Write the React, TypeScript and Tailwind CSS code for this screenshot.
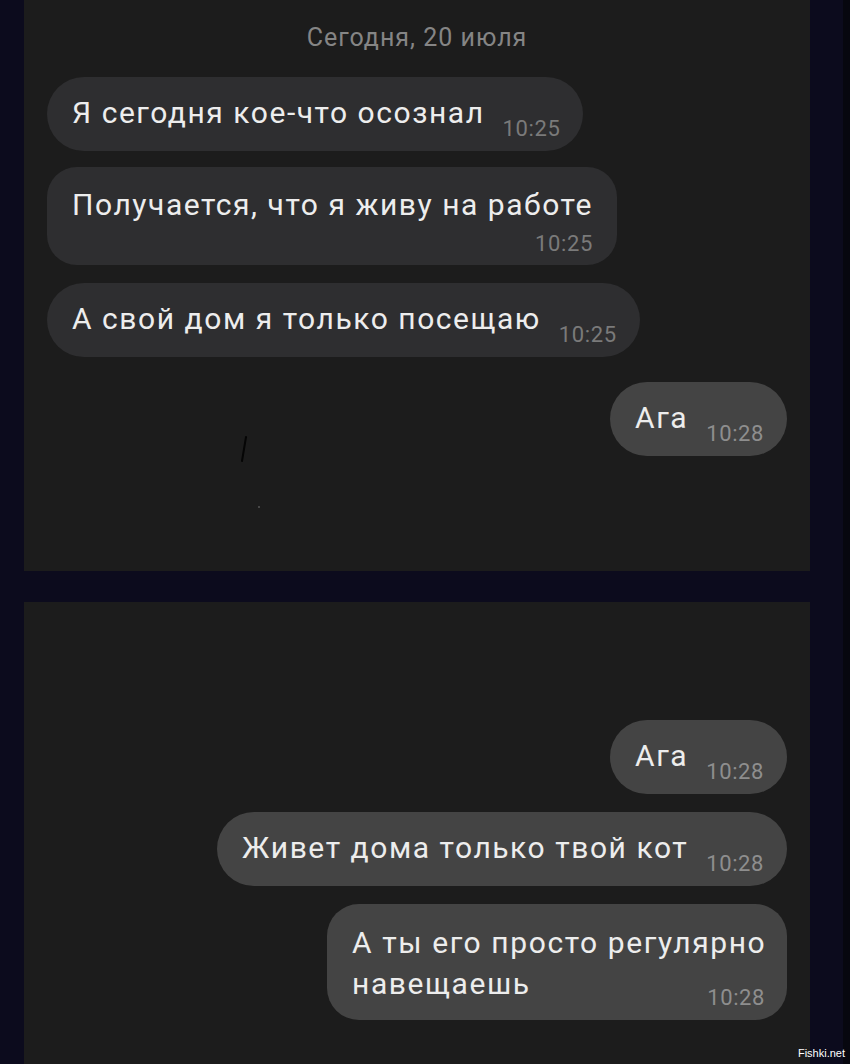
import React from 'react'

type Msg = {
  text: React.ReactNode;
  time: string;
  mine?: boolean;
  stacked?: boolean;
}

const font = { fontFamily: 'Roboto, "Noto Sans", sans-serif' }

const Bubble = ({ text, time, mine, stacked }: Msg) => {
  const bg = mine ? 'bg-[#444444]' : 'bg-[#2e2e30]'
  const timeColor = mine ? 'text-[#8e8e8e]' : 'text-[#7a7a7a]'

  if (stacked) {
    return (
      <div className={`flex flex-col rounded-[32px] pl-[25px] pr-[22px] pt-[18px] pb-[10px] ${bg}`}>
        <span className="whitespace-nowrap text-[30px] leading-[41px] tracking-[1.6px] text-[#ededed]">{text}</span>
        <span className={`self-end -mt-[18px] text-[22px] leading-[24px] tracking-[0.6px] ${timeColor}`}>{time}</span>
      </div>
    )
  }

  return (
    <div className={`flex items-end rounded-full pl-[25px] pr-[23px] pt-[19px] pb-[10px] ${bg}`}>
      <span className="mb-[11px] whitespace-nowrap text-[30px] leading-[34px] tracking-[1.55px] text-[#ededed]">{text}</span>
      <span className={`ml-[18px] text-[22px] leading-[24px] tracking-[0.6px] ${timeColor}`}>{time}</span>
    </div>
  )
}

const App = () => {
  return (
    <div className="relative flex h-[1064px] w-[850px] overflow-hidden bg-[#0c0b1d]" style={font}>
      <div className="w-[24px]" />
      <div className="flex w-[786px] flex-col">
        {/* верхний скрин */}
        <div className="relative flex h-[571px] flex-col bg-[#1c1c1c] px-[23px] pt-[23px]">
          <div className="mb-[25px] text-center text-[25px] leading-[29px] tracking-[1px] text-[#858585]">Сегодня, 20 июля</div>
          <div className="flex flex-col items-start">
            <Bubble text="Я сегодня кое-что осознал" time="10:25" />
            <div className="mt-[16px]">
              <div className="flex flex-col rounded-[30px] bg-[#2e2e30] pl-[25px] pr-[24px] pt-[21px] pb-[9px]">
                <span className="whitespace-nowrap text-[30px] leading-[34px] tracking-[1.55px] text-[#ededed]">Получается, что я живу на работе</span>
                <span className="mt-[10px] self-end text-[22px] leading-[24px] tracking-[0.6px] text-[#7a7a7a]">10:25</span>
              </div>
            </div>
            <div className="mt-[18px]">
              <Bubble text="А свой дом я только посещаю" time="10:25" />
            </div>
          </div>
          <div className="mt-[25px] flex justify-end">
            <Bubble text="Ага" time="10:28" mine />
          </div>
          <svg className="absolute left-[191px] top-[435px]" width="60" height="80" viewBox="0 0 60 80">
            <line x1="31" y1="2" x2="27" y2="26" stroke="#050505" strokeWidth="2" strokeLinecap="round" />
            <circle cx="44" cy="72" r="1" fill="#555" />
          </svg>
        </div>

        <div className="h-[31px]" />

        {/* нижний скрин */}
        <div className="flex flex-1 flex-col items-end gap-[18px] bg-[#1c1c1c] px-[23px] pt-[118px]">
          <Bubble text="Ага" time="10:28" mine />
          <Bubble text="Живет дома только твой кот" time="10:28" mine />
          <div className="w-[460px]">
            <Bubble text={<>А ты его просто регулярно<br />навещаешь</>} time="10:28" mine stacked />
          </div>
        </div>
      </div>
      <div className="w-[33px]" />
      <div className="w-[7px] bg-[#07070f]" />
      <span
        className="absolute bottom-[4px] right-[5px] text-[11px] leading-[14px] text-white"
        style={{ fontFamily: '"Liberation Sans", Arial, sans-serif' }}
      >
        Fishki.net
      </span>
    </div>
  )
}

export default App
